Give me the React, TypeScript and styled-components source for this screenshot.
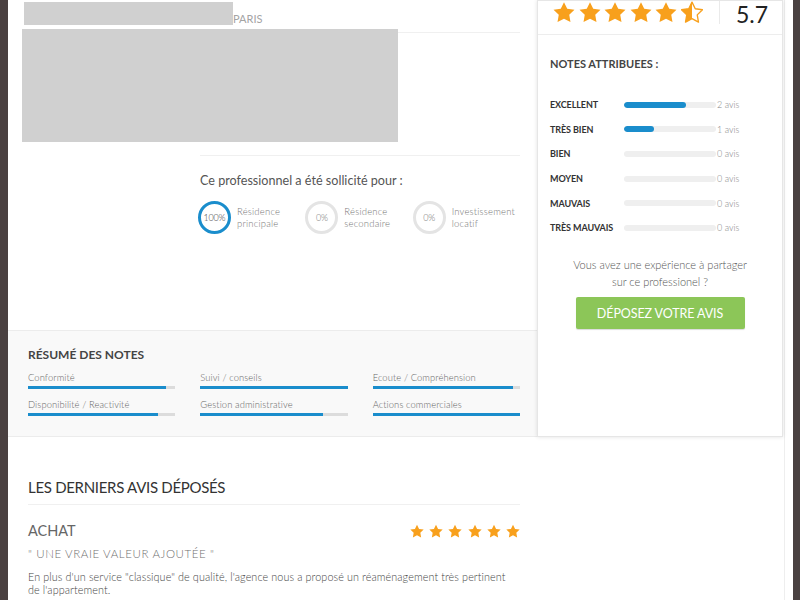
import React from "react";
import styled, { createGlobalStyle } from "styled-components";

const GlobalStyle = createGlobalStyle`
  html, body { margin: 0; padding: 0; }
  body {
    background: #4a4141;
    font-family: Lato, "Open Sans", "Liberation Sans", sans-serif;
    color: #333;
    -webkit-font-smoothing: antialiased;
  }
  * { box-sizing: border-box; }
`;

const ORANGE = "#f8a01c";
const BLUE = "#1a8dcc";

const Frame = styled.div`
  padding: 0 7px 0 8px;
  min-height: 100vh;
`;

const Sheet = styled.div`
  background: #fff;
  min-height: 100vh;
  padding-right: 8px;
`;

const Inner = styled.div`
  min-height: 100vh;
  border-right: 1px solid #eeeeee;
`;

const Top = styled.div`
  display: grid;
  grid-template-columns: 529px 246px;
  align-items: stretch;
`;

const LeftCol = styled.div`
  display: flex;
  flex-direction: column;
`;

const Info = styled.div`
  height: 330px;
  padding: 0 17px 0 14px;
`;

const NameRow = styled.div`
  display: flex;
  align-items: flex-end;
  height: 33px;
  padding-top: 2px;
  padding-left: 2px;
  border-bottom: 1px solid #f0f0f0;
`;

const NamePlaceholder = styled.div`
  width: 209px;
  height: 23px;
  background: #d0d0d0;
  align-self: flex-start;
`;

const City = styled.span`
  font-size: 11px;
  line-height: 14px;
  color: #a4a4a4;
  margin-bottom: 6px;
`;

const Photo = styled.div`
  position: relative;
  width: 376px;
  height: 113px;
  margin-top: -4px;
  background: #d0d0d0;
`;

const Solicit = styled.div`
  margin: 13px 0 0 178px;
  border-top: 1px solid #f0f0f0;
  padding-top: 17px;
`;

const SolicitTitle = styled.div`
  font-size: 12.6px;
  line-height: 16px;
  color: #555;
`;

const Purposes = styled.div`
  display: flex;
  margin: 12px 0 0 -2px;
`;

const Purpose = styled.div`
  width: 108px;
  display: flex;
  align-items: center;
  gap: 6px;
`;

const Ring = styled.div<{ $active?: boolean }>`
  width: 33px;
  height: 33px;
  flex: none;
  border-radius: 50%;
  border: 3px solid ${(p) => (p.$active ? BLUE : "#e4e4e4")};
  display: flex;
  align-items: center;
  justify-content: center;
  font-size: 9px;
  font-weight: 300;
  color: ${(p) => (p.$active ? "#444" : "#777")};
  letter-spacing: -0.2px;
`;

const PurposeLabel = styled.div`
  font-size: 9.5px;
  line-height: 12px;
  font-weight: 300;
  color: #777;
  letter-spacing: 0.2px;
  margin-top: 0;
`;

const Summary = styled.div`
  height: 107px;
  background: #f9f9f9;
  border-top: 1px solid #ececec;
  border-bottom: 1px solid #ececec;
  padding: 16px 17px 0 20px;
`;

const SectionTitle = styled.div`
  font-size: 12px;
  line-height: 15px;
  font-weight: 700;
  color: #444;
`;

const SummaryGrid = styled.div`
  display: grid;
  grid-template-columns: repeat(3, 1fr);
  column-gap: 25px;
  row-gap: 10px;
  margin-top: 10px;
`;

const Criterion = styled.div`
  display: flex;
  flex-direction: column;
  gap: 2px;
`;

const CriterionLabel = styled.div`
  font-size: 9.4px;
  line-height: 12px;
  font-weight: 300;
  color: #666;
  letter-spacing: 0.1px;
`;

const ThinTrack = styled.div`
  height: 3px;
  background: #dcdcdc;
`;

const ThinFill = styled.div`
  height: 100%;
  background: ${BLUE};
`;

const Card = styled.aside`
  background: #fff;
  border: 1px solid #e6e6e6;
  box-shadow: 0 0 4px rgba(0, 0, 0, 0.12);
  display: flex;
  flex-direction: column;
`;

const ScoreRow = styled.div`
  height: 34px;
  border-bottom: 1px solid #ededed;
  display: flex;
  align-items: flex-start;
  padding-left: 15px;
`;

const Stars = styled.div<{ $gap: number }>`
  display: flex;
  gap: ${(p) => p.$gap}px;
`;

const Divider = styled.div`
  width: 1px;
  height: 23px;
  background: #eaeaea;
  margin-left: 16px;
`;

const Score = styled.div`
  font-size: 23px;
  line-height: 26px;
  color: #222;
  margin-left: 16px;
`;

const CardTitle = styled.div`
  font-size: 11px;
  line-height: 14px;
  font-weight: 700;
  color: #444;
  padding-left: 12px;
  margin-top: 22px;
`;

const Ratings = styled.div`
  margin-top: 21.5px;
  padding-left: 12px;
  display: flex;
  flex-direction: column;
`;

const RatingRow = styled.div`
  height: 24.6px;
  display: flex;
  align-items: center;
`;

const RatingLabel = styled.div`
  width: 74px;
  font-size: 9px;
  font-weight: 700;
  color: #333;
  letter-spacing: -0.1px;
`;

const FatTrack = styled.div`
  width: 92px;
  height: 6px;
  border-radius: 3px;
  background: #efefef;
  overflow: hidden;
`;

const FatFill = styled.div`
  height: 100%;
  border-radius: 3px;
  background: ${BLUE};
`;

const Count = styled.div`
  font-size: 9px;
  font-weight: 300;
  color: #888;
  margin-left: 1px;
`;

const Cta = styled.div`
  margin-top: 16px;
  text-align: center;
  font-size: 11px;
  line-height: 17px;
  font-weight: 300;
  color: #555;
`;

const Button = styled.button`
  display: block;
  margin: 7px auto 0;
  width: 169px;
  height: 32px;
  border: none;
  border-radius: 2px;
  background: #8cc658;
  box-shadow: 0 1px 1px rgba(0, 0, 0, 0.15);
  color: #fff;
  font-family: inherit;
  font-size: 12.5px;
  text-transform: uppercase;
  letter-spacing: -0.1px;
`;

const Reviews = styled.section`
  width: 529px;
  padding: 41px 17px 0 20px;
`;

const ReviewsTitle = styled.div`
  font-size: 15px;
  line-height: 18px;
  color: #333;
  letter-spacing: -0.3px;
  padding-bottom: 8px;
  border-bottom: 1px solid #f0f0f0;
`;

const ReviewHead = styled.div`
  display: flex;
  align-items: center;
  justify-content: space-between;
  margin-top: 17px;
`;

const ReviewType = styled.div`
  font-size: 14.5px;
  line-height: 18px;
  color: #666;
`;

const ReviewQuote = styled.div`
  margin-top: 7px;
  font-size: 11.5px;
  line-height: 14px;
  font-weight: 300;
  color: #6f6f6f;
  letter-spacing: 0.6px;
`;

const ReviewText = styled.p`
  margin: 9px 0 0;
  font-size: 10.8px;
  line-height: 13px;
  font-weight: 300;
  color: #444;
  letter-spacing: 0.1px;
`;

const STAR_PATH =
  "M12 2l3.09 6.26L22 9.27l-5 4.87 1.18 6.88L12 17.77l-6.18 3.25L7 14.14 2 9.27l6.91-1.01L12 2z";

let starId = 0;
const Star: React.FC<{ size: number; fill?: number }> = ({ size, fill = 1 }) => {
  const id = React.useMemo(() => `half${starId++}`, []);
  return (
    <svg width={size} height={size} viewBox="1.5 1.2 21 20.4" style={{ display: "block" }}>
      {fill < 1 && (
        <defs>
          <clipPath id={id}>
            <rect x="0" y="0" width={12} height="24" />
          </clipPath>
        </defs>
      )}
      {fill >= 1 ? (
        <path d={STAR_PATH} fill={ORANGE} />
      ) : (
        <>
          <path d={STAR_PATH} fill={ORANGE} clipPath={`url(#${id})`} />
          <path d={STAR_PATH} fill="none" stroke={ORANGE} strokeWidth={1.3} strokeLinejoin="round" />
        </>
      )}
    </svg>
  );
};

const purposes = [
  { pct: "100%", label: ["Résidence", "principale"], active: true },
  { pct: "0%", label: ["Résidence", "secondaire"], active: false },
  { pct: "0%", label: ["Investissement", "locatif"], active: false },
];

const criteria = [
  { label: "Conformité", v: 94 },
  { label: "Suivi / conseils", v: 100 },
  { label: "Ecoute / Compréhension", v: 95 },
  { label: "Disponibilité / Reactivité", v: 88 },
  { label: "Gestion administrative", v: 83 },
  { label: "Actions commerciales", v: 100 },
];

const ratings = [
  { label: "EXCELLENT", v: 67, n: "2 avis" },
  { label: "TRÈS BIEN", v: 33, n: "1 avis" },
  { label: "BIEN", v: 0, n: "0 avis" },
  { label: "MOYEN", v: 0, n: "0 avis" },
  { label: "MAUVAIS", v: 0, n: "0 avis" },
  { label: "TRÈS MAUVAIS", v: 0, n: "0 avis" },
];

export default function App() {
  return (
    <>
      <GlobalStyle />
      <Frame>
        <Sheet>
          <Inner>
            <Top>
              <LeftCol>
                <Info>
                  <NameRow>
                    <NamePlaceholder />
                    <City>PARIS</City>
                  </NameRow>
                  <Photo />
                  <Solicit>
                    <SolicitTitle>Ce professionnel a été sollicité pour :</SolicitTitle>
                    <Purposes>
                      {purposes.map((p, i) => (
                        <Purpose key={i}>
                          <Ring $active={p.active}>{p.pct}</Ring>
                          <PurposeLabel>
                            {p.label[0]}
                            <br />
                            {p.label[1]}
                          </PurposeLabel>
                        </Purpose>
                      ))}
                    </Purposes>
                  </Solicit>
                </Info>
                <Summary>
                  <SectionTitle>RÉSUMÉ DES NOTES</SectionTitle>
                  <SummaryGrid>
                    {criteria.map((c) => (
                      <Criterion key={c.label}>
                        <CriterionLabel>{c.label}</CriterionLabel>
                        <ThinTrack>
                          <ThinFill style={{ width: `${c.v}%` }} />
                        </ThinTrack>
                      </Criterion>
                    ))}
                  </SummaryGrid>
                </Summary>
              </LeftCol>
              <Card>
                <ScoreRow>
                  <Stars $gap={3.6}>
                    {[1, 1, 1, 1, 1, 0.5].map((f, i) => (
                      <Star key={i} size={22} fill={f} />
                    ))}
                  </Stars>
                  <Divider />
                  <Score>5.7</Score>
                </ScoreRow>
                <CardTitle>NOTES ATTRIBUEES :</CardTitle>
                <Ratings>
                  {ratings.map((r) => (
                    <RatingRow key={r.label}>
                      <RatingLabel>{r.label}</RatingLabel>
                      <FatTrack>
                        <FatFill style={{ width: `${r.v}%` }} />
                      </FatTrack>
                      <Count>{r.n}</Count>
                    </RatingRow>
                  ))}
                </Ratings>
                <Cta>
                  Vous avez une expérience à partager
                  <br />
                  sur ce professionel ?
                </Cta>
                <Button>Déposez votre avis</Button>
              </Card>
            </Top>
            <Reviews>
              <ReviewsTitle>LES DERNIERS AVIS DÉPOSÉS</ReviewsTitle>
              <ReviewHead>
                <ReviewType>ACHAT</ReviewType>
                <Stars $gap={5.2}>
                  {[0, 1, 2, 3, 4, 5].map((i) => (
                    <Star key={i} size={14} />
                  ))}
                </Stars>
              </ReviewHead>
              <ReviewQuote>" UNE VRAIE VALEUR AJOUTÉE "</ReviewQuote>
              <ReviewText>
                En plus d'un service "classique" de qualité, l'agence nous a proposé un
                réaménagement très pertinent de l'appartement.
              </ReviewText>
            </Reviews>
          </Inner>
        </Sheet>
      </Frame>
    </>
  );
}
